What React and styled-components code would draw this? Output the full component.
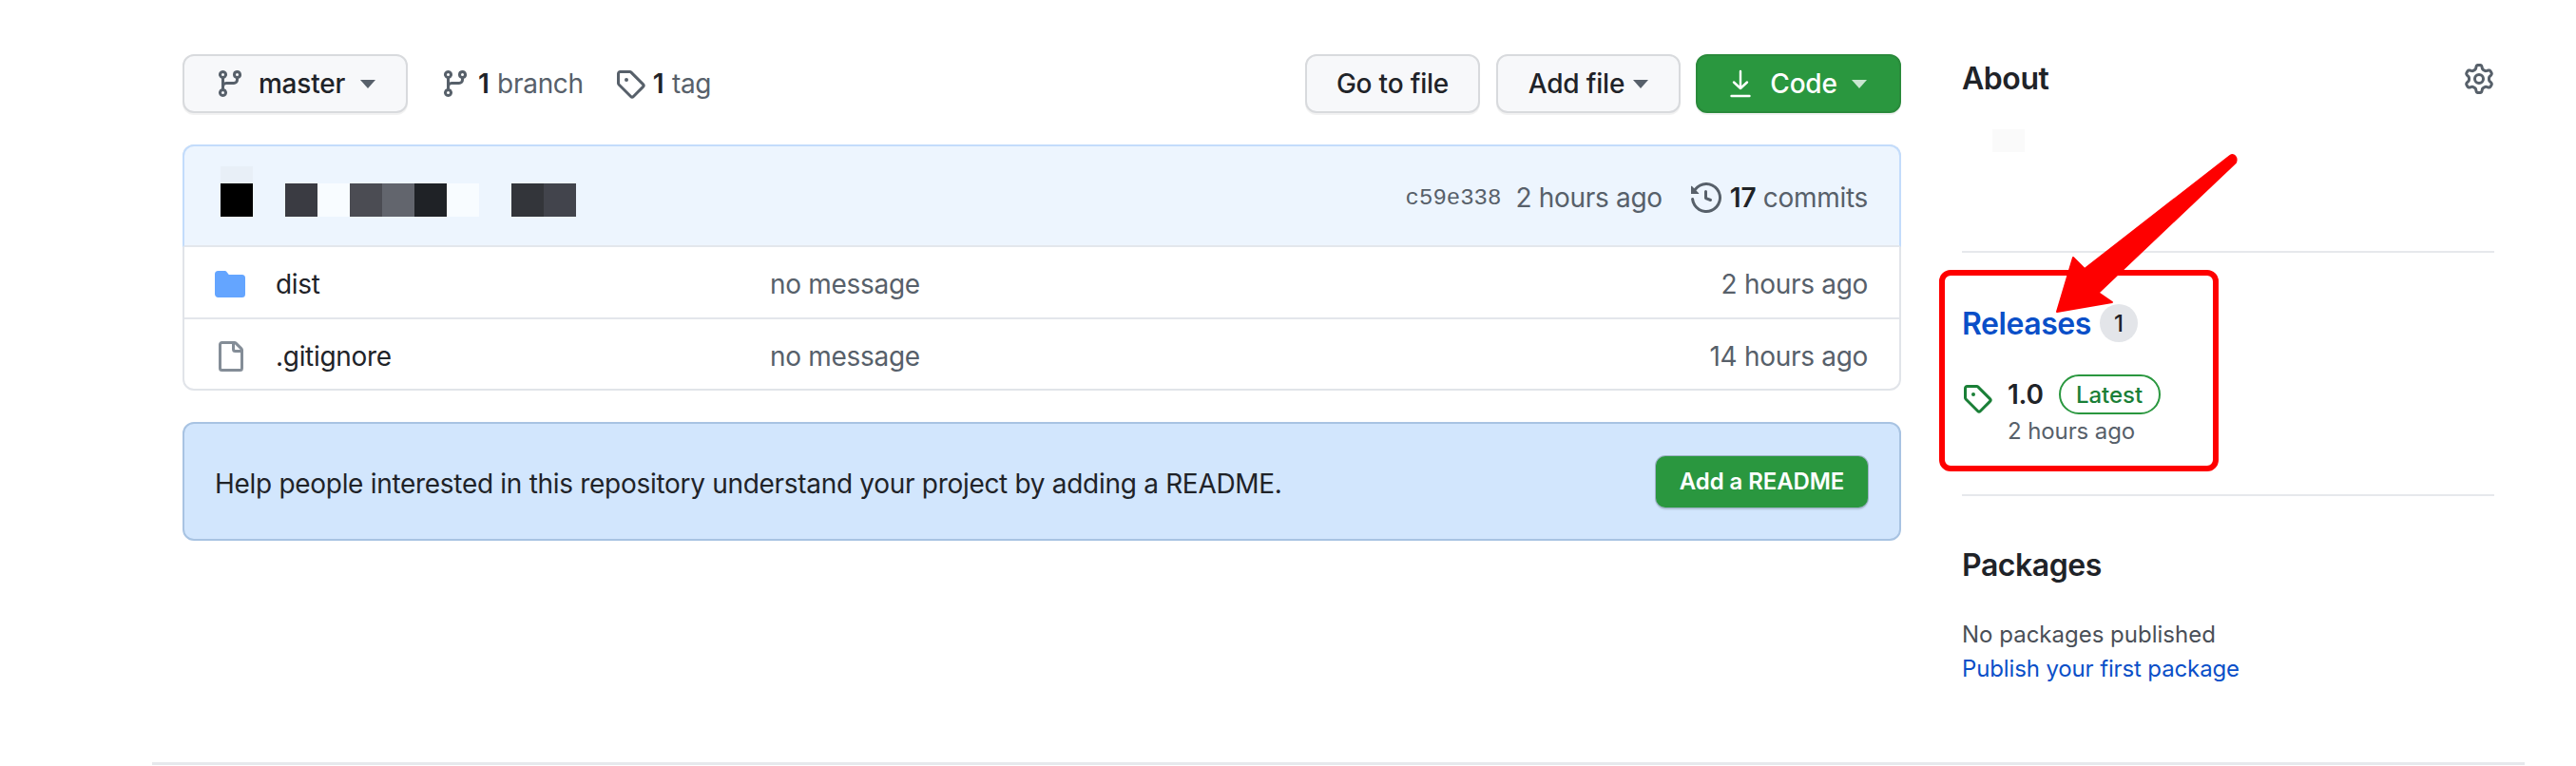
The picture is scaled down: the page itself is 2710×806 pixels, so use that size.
import React from 'react'
import styled, { createGlobalStyle } from 'styled-components'

const GlobalStyle = createGlobalStyle`
  html, body {
    margin: 0;
    padding: 0;
    background: #fff;
    overflow: hidden;
  }
  body {
    font-family: Inter, "Liberation Sans", sans-serif;
    color: #1f2328;
    letter-spacing: -0.3px;
    -webkit-font-smoothing: antialiased;
  }
  * {
    box-sizing: border-box;
  }
`

const Page = styled.div`
  position: relative;
  width: 2710px;
  height: 806px;
`

const Layout = styled.div`
  width: 2496px;
  height: 805px;
  margin-left: 160px;
  padding: 57px 32px 0;
  display: flex;
  gap: 64px;
  border-bottom: 3px solid #e6e8ec;
`

const Main = styled.main`
  width: 1808px;
`

const TopBar = styled.div`
  display: flex;
  align-items: center;
  height: 62px;
  margin-bottom: 33px;
`

const Button = styled.div`
  height: 62px;
  display: flex;
  align-items: center;
  justify-content: center;
  width: ${props => props.$width}px;
  margin-left: ${props => props.$left || 0}px;
  border-radius: 12px;
  border: 2px solid ${props => (props.$primary ? '#2a8a3b' : '#d8dadd')};
  background: ${props => (props.$primary ? '#2a973f' : '#f7f8fa')};
  color: ${props => (props.$primary ? '#fff' : '#1f2328')};
  box-shadow: 0 2px 0 rgba(31, 35, 40, 0.06);
  font-size: 28px;
  font-weight: 500;
  letter-spacing: -0.2px;
  white-space: nowrap;
`

const ButtonLabel = styled.span`
  margin-left: ${props => props.$left}px;
`

const Caret = styled.span`
  width: 0;
  height: 0;
  border-top: 9px solid ${props => props.$color || '#57606a'};
  border-left: 8px solid transparent;
  border-right: 8px solid transparent;
  margin-left: ${props => props.$left || 0}px;
`

const Icon = styled.svg`
  width: ${props => props.$size || 32}px;
  height: ${props => props.$size || 32}px;
  fill: ${props => props.$color || '#57606a'};
  flex: none;
`

const Stat = styled.div`
  display: flex;
  align-items: center;
  gap: 8px;
  margin-left: ${props => props.$left}px;
  font-size: 28px;
  color: #57606a;
  word-spacing: 1px;
  white-space: nowrap;

  b {
    font-weight: 600;
    color: #1f2328;
  }
`

const Spacer = styled.div`
  flex: 1;
`

const DownloadIcon = styled.svg`
  width: 22px;
  height: 32px;
  flex: none;
`

const FileBox = styled.div`
  border: 2px solid #e1e4e9;
  border-radius: 12px;
`

const CommitHeader = styled.div`
  height: 108px;
  margin: -2px -2px 0;
  padding: 4px 33px 0 38px;
  display: flex;
  align-items: center;
  background: #edf5fe;
  border: 2px solid #c3dcfb;
  border-bottom-color: #e3e7ec;
  border-radius: 12px 12px 0 0;
  color: #57606a;
  font-size: 28px;
`

const Mosaic = styled.div`
  display: flex;
  align-self: flex-start;
  margin-top: 17px;
`

const Pixel = styled.span`
  width: 34px;
  height: 53px;
  background: linear-gradient(${props => props.$over || 'transparent'} 18px, ${props => props.$color} 18px);
`

const CommitHash = styled.span`
  font-family: "Liberation Mono", monospace;
  font-size: 24px;
  letter-spacing: 0;
  margin-right: 15px;
`

const History = styled.div`
  display: flex;
  align-items: center;
  margin-left: 30px;
  gap: 9px;
  white-space: nowrap;

  b {
    font-weight: 600;
    color: #1f2328;
  }
`

const FileRow = styled.div`
  height: ${props => props.$height}px;
  display: flex;
  align-items: center;
  padding: 4px 33px 0 32px;
  font-size: 28px;
  border-top: ${props => (props.$divided ? '2px solid #e3e6eb' : 'none')};
`

const IconCell = styled.div`
  width: 32px;
  height: 32px;
  margin-right: 32px;
  display: flex;
  align-items: center;
  justify-content: center;
`

const FileName = styled.span`
  width: 520px;
`

const Message = styled.span`
  flex: 1;
  color: #57606a;
`

const Age = styled.span`
  color: #57606a;
`

const Banner = styled.div`
  height: 125px;
  margin-top: 33px;
  padding: 0 33px 0 32px;
  display: flex;
  align-items: center;
  justify-content: space-between;
  background: #d2e6fd;
  border: 2px solid #a8c3e2;
  border-radius: 12px;
  font-size: 28px;
`

const BannerText = styled.span`
  padding-top: 4px;
`

const ReadmeButton = styled.div`
  width: 223px;
  height: 54px;
  display: flex;
  align-items: center;
  justify-content: center;
  background: #2a973f;
  border-radius: 10px;
  box-shadow: 0 0 0 1px #9db3c6, 0 2px 2px rgba(31, 35, 40, 0.2);
  color: #fff;
  font-size: 24px;
  font-weight: 600;
  letter-spacing: -0.1px;
  white-space: nowrap;
`

const Side = styled.aside`
  width: 560px;
`

const SideSection = styled.section`
  padding: ${props => props.$pad};
  border-bottom: ${props => (props.$last ? 'none' : '2px solid #e6e8ec')};
`

const SideHeading = styled.h2`
  margin: 0;
  height: 46px;
  line-height: 46px;
  font-size: 32px;
  font-weight: 600;
  letter-spacing: -0.45px;
  display: flex;
  align-items: center;
  justify-content: space-between;
`

const FaintBlock = styled.div`
  width: 34px;
  height: 24px;
  margin: 30px 0 0 32px;
  background: #fafafa;
`

const ReleasesHeading = styled.div`
  display: flex;
  align-items: center;
  height: 40px;
  gap: 9px;
`

const ReleasesLink = styled.a`
  font-size: 32px;
  font-weight: 600;
  letter-spacing: -0.45px;
  color: #0a4fc8;
`

const Count = styled.span`
  width: 40px;
  height: 40px;
  border-radius: 50%;
  background: #e3e5e9;
  font-size: 24px;
  font-weight: 500;
  display: flex;
  align-items: center;
  justify-content: center;
`

const ReleaseRow = styled.div`
  display: flex;
  margin-top: 34px;
`

const ReleaseIcon = styled(Icon)`
  margin-top: 9px;
  margin-right: 16px;
`

const ReleaseBody = styled.div`
  display: flex;
  flex-direction: column;
`

const ReleaseTitle = styled.div`
  display: flex;
  align-items: center;
  height: 42px;
  gap: 16px;
  font-size: 28px;
  font-weight: 600;
`

const LatestPill = styled.span`
  width: 107px;
  height: 42px;
  border: 2px solid #2a973f;
  border-radius: 21px;
  color: #1a7f37;
  font-size: 24px;
  font-weight: 500;
  letter-spacing: 0;
  display: flex;
  align-items: center;
  justify-content: center;
`

const ReleaseDate = styled.div`
  font-size: 24px;
  line-height: 36px;
  letter-spacing: -0.1px;
  color: #57606a;
`

const PlainLine = styled.div`
  font-size: 24px;
  line-height: 36px;
  letter-spacing: ${props => (props.$link ? '-0.13px' : '0')};
  color: ${props => (props.$link ? '#0a4fc8' : '#4a4f57')};
  margin-top: ${props => props.$top || 0}px;
`

const Frame = styled.div`
  position: absolute;
  left: 2040px;
  top: 284px;
  width: 294px;
  height: 212px;
  border: 6px solid #fe0000;
  border-radius: 12px;
`

const Arrow = styled.svg`
  position: absolute;
  left: 2150px;
  top: 155px;
  width: 210px;
  height: 180px;
`

const paths = {
  branch: 'M9.5 3.25a2.25 2.25 0 1 1 3 2.122V6A2.5 2.5 0 0 1 10 8.5H6a1 1 0 0 0-1 1v1.128a2.251 2.251 0 1 1-1.5 0V5.372a2.25 2.25 0 1 1 1.5 0v1.836A2.493 2.493 0 0 1 6 7h4a1 1 0 0 0 1-1v-.628A2.25 2.25 0 0 1 9.5 3.25Zm-6 0a.75.75 0 1 0 1.5 0 .75.75 0 0 0-1.5 0Zm8.25-.75a.75.75 0 1 0 0 1.5.75.75 0 0 0 0-1.5ZM4.25 12a.75.75 0 1 0 0 1.5.75.75 0 0 0 0-1.5Z',
  tag: 'M1 7.775V2.75C1 1.784 1.784 1 2.75 1h5.025c.464 0 .91.184 1.238.513l6.25 6.25a1.75 1.75 0 0 1 0 2.474l-5.026 5.026a1.75 1.75 0 0 1-2.474 0l-6.25-6.25A1.752 1.752 0 0 1 1 7.775Zm1.5 0c0 .066.026.13.073.177l6.25 6.25a.25.25 0 0 0 .354 0l5.025-5.025a.25.25 0 0 0 0-.354l-6.25-6.25a.25.25 0 0 0-.177-.073H2.75a.25.25 0 0 0-.25.25ZM6 5a1 1 0 1 1 0 2 1 1 0 0 1 0-2Z',
  history: 'm.427 1.927 1.215 1.215a8.002 8.002 0 1 1-1.6 5.685.75.75 0 1 1 1.493-.154 6.5 6.5 0 1 0 1.18-4.458l1.358 1.358A.25.25 0 0 1 3.896 6H.25A.25.25 0 0 1 0 5.75V2.104a.25.25 0 0 1 .427-.177ZM7.75 4a.75.75 0 0 1 .75.75v2.992l2.028.812a.75.75 0 0 1-.557 1.392l-2.5-1A.751.751 0 0 1 7 8.25v-3.5A.75.75 0 0 1 7.75 4Z',
  folder: 'M1.75 1A1.75 1.75 0 0 0 0 2.75v10.5C0 14.216.784 15 1.75 15h12.5A1.75 1.75 0 0 0 16 13.25v-8.5A1.75 1.75 0 0 0 14.25 3H7.5a.25.25 0 0 1-.2-.1l-.9-1.2C6.07 1.26 5.55 1 5 1H1.75Z',
  file: 'M2 1.75C2 .784 2.784 0 3.75 0h6.586c.464 0 .909.184 1.237.513l2.914 2.914c.329.328.513.773.513 1.237v9.586A1.75 1.75 0 0 1 13.25 16h-9.5A1.75 1.75 0 0 1 2 14.25Zm1.75-.25a.25.25 0 0 0-.25.25v12.5c0 .138.112.25.25.25h9.5a.25.25 0 0 0 .25-.25V6h-2.75A1.75 1.75 0 0 1 9 4.25V1.5Zm6.75.062V4.25c0 .138.112.25.25.25h2.688l-.011-.013-2.914-2.914-.013-.011Z',
  gear: 'M8 0a8.2 8.2 0 0 1 .701.031C9.444.095 9.99.645 10.16 1.29l.288 1.107c.018.066.079.158.212.224.231.114.454.243.668.386.123.082.233.09.299.071l1.103-.303c.644-.176 1.392.021 1.82.63.27.385.506.792.704 1.218.315.675.111 1.422-.364 1.891l-.814.806c-.049.048-.098.147-.088.294.016.257.016.515 0 .772-.01.147.038.246.088.294l.814.806c.475.469.679 1.216.364 1.891a7.977 7.977 0 0 1-.704 1.217c-.428.61-1.176.807-1.82.63l-1.102-.302c-.067-.019-.177-.011-.3.071a5.909 5.909 0 0 1-.668.386c-.133.066-.194.158-.211.224l-.29 1.106c-.168.646-.715 1.196-1.458 1.26a8.006 8.006 0 0 1-1.402 0c-.743-.064-1.289-.614-1.458-1.26l-.289-1.106c-.018-.066-.079-.158-.212-.224a5.738 5.738 0 0 1-.668-.386c-.123-.082-.233-.09-.299-.071l-1.103.303c-.644.176-1.392-.021-1.82-.63a8.12 8.12 0 0 1-.704-1.218c-.315-.675-.111-1.422.363-1.891l.815-.806c.05-.048.098-.147.088-.294a6.214 6.214 0 0 1 0-.772c.01-.147-.038-.246-.088-.294l-.815-.806C.635 6.045.431 5.298.746 4.623a7.92 7.92 0 0 1 .704-1.217c.428-.61 1.176-.807 1.82-.63l1.102.302c.067.019.177.011.3-.071.214-.143.437-.272.668-.386.133-.066.194-.158.211-.224l.29-1.106C6.009.645 6.556.095 7.299.03 7.53.01 7.764 0 8 0Zm-.571 1.525c-.036.003-.108.036-.137.146l-.289 1.105c-.147.561-.549.967-.998 1.189-.173.086-.34.183-.5.29-.417.278-.97.423-1.529.27l-1.103-.303c-.109-.03-.175.016-.195.045-.22.312-.412.644-.573.99-.014.031-.021.11.059.19l.815.806c.411.406.562.957.53 1.456a4.709 4.709 0 0 0 0 .582c.032.499-.119 1.05-.53 1.456l-.815.806c-.081.08-.073.159-.059.19.162.346.353.677.573.989.02.03.085.076.195.046l1.102-.303c.56-.153 1.113-.008 1.53.27.161.107.328.204.501.29.447.222.85.629.997 1.189l.289 1.105c.029.109.101.143.137.146a6.6 6.6 0 0 0 1.142 0c.036-.003.108-.036.137-.146l.289-1.105c.147-.561.549-.967.998-1.189.173-.086.34-.183.5-.29.417-.278.97-.423 1.529-.27l1.103.303c.109.029.175-.016.195-.045.22-.313.411-.644.573-.99.014-.031.021-.11-.059-.19l-.815-.806c-.411-.406-.562-.957-.53-1.456a4.709 4.709 0 0 0 0-.582c-.032-.499.119-1.05.53-1.456l.815-.806c.081-.08.073-.159.059-.19a6.464 6.464 0 0 0-.573-.989c-.02-.03-.085-.076-.195-.046l-1.102.303c-.56.153-1.113.008-1.53-.27a4.44 4.44 0 0 0-.501-.29c-.447-.222-.85-.629-.997-1.189l-.289-1.105c-.029-.11-.101-.143-.137-.146a6.6 6.6 0 0 0-1.142 0ZM11 8a3 3 0 1 1-6 0 3 3 0 0 1 6 0ZM9.5 8a1.5 1.5 0 1 0-3.001.001A1.5 1.5 0 0 0 9.5 8Z'
}

const Octicon = ({ name, ...rest }) => (
  <Icon viewBox="0 0 16 16" {...rest}>
    <path fillRule="evenodd" d={paths[name]} />
  </Icon>
)

const pixels = [
  { color: '#000', over: '#e8eff7' },
  { color: 'transparent' },
  { color: '#3a3b42' },
  { color: '#f8fcff' },
  { color: '#4b4c53' },
  { color: '#62656d' },
  { color: '#1f2226' },
  { color: '#f8fcff' },
  { color: 'transparent' },
  { color: '#33353a' },
  { color: '#42444c' }
]

const files = [
  { name: 'dist', age: '2 hours ago', dir: true, height: 74 },
  { name: '.gitignore', age: '14 hours ago', dir: false, height: 75 }
]

const App = () => {
  return (
    <Page>
      <GlobalStyle />
      <Layout>
        <Main>
          <TopBar>
            <Button $width={237}>
              <Octicon name="branch" />
              <ButtonLabel $left={14}>master</ButtonLabel>
              <Caret $left={16} />
            </Button>
            <Stat $left={34}>
              <Octicon name="branch" />
              <span><b>1</b> branch</span>
            </Stat>
            <Stat $left={33}>
              <Octicon name="tag" />
              <span><b>1</b> tag</span>
            </Stat>
            <Spacer />
            <Button $width={184}>Go to file</Button>
            <Button $width={194} $left={17}>
              Add file
              <Caret $left={9} />
            </Button>
            <Button $width={216} $left={16} $primary>
              <DownloadIcon viewBox="0 0 22 32" fill="none" stroke="#fff" strokeWidth="2.4" strokeLinecap="round" strokeLinejoin="round">
                <path d="M11 3v18M4 14.5 11 21l7-6.5" />
                <path d="M1.5 29h19" />
              </DownloadIcon>
              <ButtonLabel $left={20}>Code</ButtonLabel>
              <Caret $left={15} $color="#c9e6d0" />
            </Button>
          </TopBar>

          <FileBox>
            <CommitHeader>
              <Mosaic>
                {pixels.map((p, i) => (
                  <Pixel key={i} $color={p.color} $over={p.over} />
                ))}
              </Mosaic>
              <Spacer />
              <CommitHash>c59e338</CommitHash>
              <span>2 hours ago</span>
              <History>
                <Octicon name="history" />
                <span><b>17</b> commits</span>
              </History>
            </CommitHeader>
            {files.map((file, i) => (
              <FileRow key={file.name} $height={file.height} $divided={i > 0}>
                <IconCell>
                  <Octicon name={file.dir ? 'folder' : 'file'} $color={file.dir ? '#64a5ff' : '#848d97'} />
                </IconCell>
                <FileName>{file.name}</FileName>
                <Message>no message</Message>
                <Age>{file.age}</Age>
              </FileRow>
            ))}
          </FileBox>

          <Banner>
            <BannerText>Help people interested in this repository understand your project by adding a README.</BannerText>
            <ReadmeButton>Add a README</ReadmeButton>
          </Banner>
        </Main>

        <Side>
          <SideSection $pad="3px 0 104px">
            <SideHeading>
              About
              <Octicon name="gear" />
            </SideHeading>
            <FaintBlock />
          </SideSection>
          <SideSection $pad="54px 0 48px">
            <ReleasesHeading>
              <ReleasesLink>Releases</ReleasesLink>
              <Count>1</Count>
            </ReleasesHeading>
            <ReleaseRow>
              <ReleaseIcon as={Octicon} name="tag" $color="#1a7f37" />
              <ReleaseBody>
                <ReleaseTitle>
                  1.0
                  <LatestPill>Latest</LatestPill>
                </ReleaseTitle>
                <ReleaseDate>2 hours ago</ReleaseDate>
              </ReleaseBody>
            </ReleaseRow>
          </SideSection>
          <SideSection $pad="50px 0 0" $last>
            <SideHeading>Packages</SideHeading>
            <PlainLine $top={32}>No packages published</PlainLine>
            <PlainLine $link>Publish your first package</PlainLine>
          </SideSection>
        </Side>
      </Layout>

      <Frame />
      <Arrow viewBox="2150 155 210 180">
        <path
          fill="#fe0000"
          stroke="#fe0000"
          strokeWidth="2"
          strokeLinejoin="round"
          d="M2346 164 2193 283 2181 271 2164 328 2222 318 2207.5 308 2352 171C2354 166 2350 161 2346 164Z"
        />
      </Arrow>
    </Page>
  )
}

export default App
